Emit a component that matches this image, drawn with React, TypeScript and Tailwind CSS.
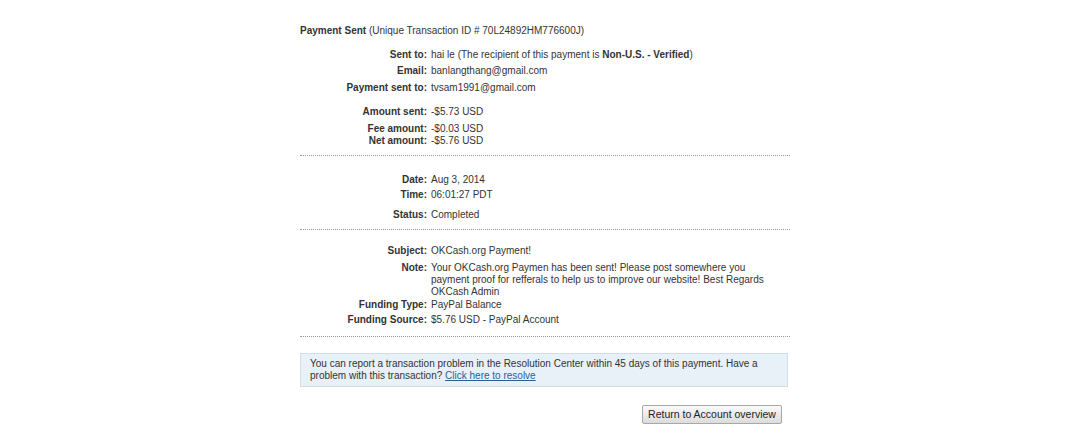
import React from 'react'

type Row = { label: string; value: React.ReactNode; mt: string }

function DetailRow({ label, value, mt }: Row) {
  return (
    <div className={`flex ${mt}`}>
      <div className="w-[127px] shrink-0 text-right font-bold text-[#333]">{label}</div>
      <div className="pl-[4px] text-[#333]">{value}</div>
    </div>
  )
}

function Divider({ mt }: { mt: string }) {
  return <div className={`${mt} border-t border-dotted border-[#9a9a9a]`} />
}

export default function App(): React.ReactElement {
  return (
    <div className="w-[1080px] h-[445px] bg-white overflow-hidden font-['Liberation_Sans',Arial,sans-serif] text-[10px] leading-[12px] text-[#333]">
      <div className="ml-[300px] w-[490px] pt-[25px]">
        {/* Header */}
        <div>
          <span className="font-bold">Payment Sent</span> (Unique Transaction ID # 70L24892HM776600J)
        </div>

        {/* Parties */}
        <DetailRow
          mt="mt-[12px]"
          label="Sent to:"
          value={<>hai le (The recipient of this payment is <span className="font-bold">Non-U.S. - Verified</span>)</>}
        />
        <DetailRow mt="mt-[4px]" label="Email:" value="banlangthang@gmail.com" />
        <DetailRow mt="mt-[5px]" label="Payment sent to:" value="tvsam1991@gmail.com" />

        {/* Amounts */}
        <DetailRow mt="mt-[12px]" label="Amount sent:" value="-$5.73 USD" />
        <DetailRow mt="mt-[5px]" label="Fee amount:" value="-$0.03 USD" />
        <DetailRow mt="mt-0" label="Net amount:" value="-$5.76 USD" />

        <Divider mt="mt-[8px]" />

        {/* Date / status */}
        <DetailRow mt="mt-[18px]" label="Date:" value="Aug 3, 2014" />
        <DetailRow mt="mt-[3px]" label="Time:" value="06:01:27 PDT" />
        <DetailRow mt="mt-[8px]" label="Status:" value="Completed" />

        <Divider mt="mt-[8px]" />

        {/* Details */}
        <DetailRow mt="mt-[15px]" label="Subject:" value="OKCash.org Payment!" />
        <DetailRow
          mt="mt-[5px]"
          label="Note:"
          value={
            <div className="w-[338px]">
              Your OKCash.org Paymen has been sent! Please post somewhere you payment proof for refferals to help us to improve our website! Best Regards OKCash Admin
            </div>
          }
        />
        <DetailRow mt="mt-[1px]" label="Funding Type:" value="PayPal Balance" />
        <DetailRow mt="mt-[3px]" label="Funding Source:" value="$5.76 USD - PayPal Account" />

        <Divider mt="mt-[10px]" />

        {/* Resolution notice */}
        <div className="mt-[16px] w-[488px] border border-[#d3dde9] bg-[#e8f0f8] pl-[9px] pr-[20px] pt-[4px] pb-[4px]">
          You can report a transaction problem in the Resolution Center within 45 days of this payment. Have a problem with this transaction?{' '}
          <a href="#" className="text-[#2a5e9c] underline">Click here to resolve</a>
        </div>

        <div className="mt-[18px] flex justify-end pr-[8px]">
          <button className="h-[19px] w-[140px] border border-[#a8a8a8] bg-gradient-to-b from-[#fafafa] to-[#dcdcdc] text-[10.5px] leading-[17px] text-[#222] rounded-[2px]">
            Return to Account overview
          </button>
        </div>
      </div>
    </div>
  )
}
